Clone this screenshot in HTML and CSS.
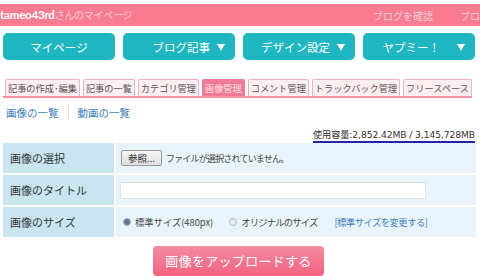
FILE: index.html
```html
<!DOCTYPE html>
<html lang="ja">
<head>
<meta charset="utf-8">
<link rel="stylesheet" href="styles.css">
</head>
<body>
<div class="page">
  <header class="topbar">
    <div class="user"><b>tameo43rd</b><span>さんのマイページ</span></div>
    <nav class="toplinks"><span>ブログを確認</span><span>ブロ</span></nav>
  </header>
  <div class="menu">
    <div class="mbtn">マイページ</div>
    <div class="mbtn arrow">ブログ記事</div>
    <div class="mbtn arrow">デザイン設定</div>
    <div class="mbtn arrow wide">ヤプミー！</div>
  </div>
  <div class="tabs">
    <div class="tab">記事の作成･編集</div>
    <div class="tab">記事の一覧</div>
    <div class="tab">カテゴリ管理</div>
    <div class="tab active">画像管理</div>
    <div class="tab">コメント管理</div>
    <div class="tab">トラックバック管理</div>
    <div class="tab">フリースペース</div>
  </div>
  <div class="sublinks"><a>画像の一覧</a><span class="sep"></span><a>動画の一覧</a></div>
  <div class="usage"><span>使用容量:2,852.42MB / 3,145,728MB</span></div>
  <div class="form">
    <div class="row">
      <div class="label">画像の選択</div>
      <div class="field"><span class="browse">参照...</span><span class="note">ファイルが選択されていません。</span></div>
    </div>
    <div class="row">
      <div class="label">画像のタイトル</div>
      <div class="field"><span class="textbox"></span></div>
    </div>
    <div class="row">
      <div class="label">画像のサイズ</div>
      <div class="field small">
        <span class="radio on"></span><span class="opt">標準サイズ(480px)</span>
        <span class="radio second"></span><span class="opt narrow">オリジナルのサイズ</span>
        <a class="change">[標準サイズを変更する]</a>
      </div>
    </div>
  </div>
  <div class="submit"><div class="upload">画像をアップロードする</div></div>
</div>
</body>
</html>
```
FILE: styles.css
```css
html, body { margin: 0; padding: 0; background: #fff; }
body { width: 480px; height: 276px; overflow: hidden; font-family: "Noto Sans CJK JP", "Noto Sans", sans-serif; color: #333; }
.page { padding-top: 4px; }
.topbar { height: 22px; background: #f97b8f; display: flex; align-items: center; justify-content: space-between; white-space: nowrap; overflow: hidden; }
.user { font-size: 10px; color: #fff; line-height: 22px; }
.user b { font-family: "Lato", "Noto Sans", sans-serif; font-weight: 700; font-size: 11.5px; letter-spacing: -0.2px; }
.user span { color: #fcd0d8; font-size: 10px; letter-spacing: -0.3px; }
.toplinks { display: flex; gap: 27px; font-size: 10px; color: #fcd0d8; margin-right: 0; }
.menu { display: flex; gap: 8px; padding: 7px 0 0 3px; }
.mbtn { width: 112px; height: 27px; border-radius: 5px; background: #1eb6c1; color: #fff; font-size: 11.5px; display: flex; align-items: center; justify-content: center; position: relative; box-sizing: border-box; }
.mbtn.arrow { justify-content: flex-end; padding-right: 25px; }
.mbtn.arrow.wide { padding-right: 35px; }
.mbtn.arrow::after { content: ""; position: absolute; right: 10px; top: 11px; border-left: 4px solid transparent; border-right: 4px solid transparent; border-top: 7px solid #fff; }
.tabs { display: flex; gap: 3px; margin: 19px 8px 0 3px; padding-left: 2px; border-bottom: 2px solid #f690a6; height: 17px; align-items: flex-end; }
.tab { height: 16px; padding: 0 2px; border: 1px solid #f4b2c0; border-bottom: none; background: #fdeef1; font-size: 9.2px; line-height: 16px; color: #555; border-radius: 2px 2px 0 0; white-space: nowrap; }
.tab.active { background: #f27995; border-color: #f27995; color: #fde3e9; }
.sublinks { display: flex; align-items: center; padding: 8px 0 0 6px; font-size: 10.5px; line-height: 14px; }
.sublinks a { color: #3d7fbf; }
.sep { width: 1px; height: 14px; background: #dde3e8; margin: 0 9px; }
.usage { text-align: right; padding: 7px 5px 0 0; font-size: 10px; line-height: 13px; }
.usage span { font-family: "DejaVu Sans", "Noto Sans CJK JP", sans-serif; font-size: 9.2px; border-bottom: 2px solid #2222aa; padding-bottom: 1px; color: #333; letter-spacing: -0.1px; }
.form { display: flex; flex-direction: column; gap: 2px; margin: 2px 4px 0 3px; }
.row { display: flex; gap: 2px; height: 30px; }
.label { width: 111px; background: #c8e5f1; font-size: 11px; line-height: 30px; padding-left: 7px; box-sizing: border-box; color: #333; }
.field { flex: 1; background: #e8f4f9; display: flex; align-items: center; padding-left: 4px; font-size: 10px; color: #444; }
.field.small { font-size: 9.3px; }
.browse { display: inline-block; height: 14px; line-height: 14px; padding: 0 6px; margin-left: 1px; border: 1px solid #999; border-radius: 2px; background: linear-gradient(#f6f6f6, #dedede); font-size: 9.5px; color: #222; }
.note { margin-left: 4px; font-size: 9px; letter-spacing: -0.8px; }
.textbox { display: block; width: 304px; height: 15px; background: #fff; border: 1px solid #dfe7ea; border-top-color: #cfd8dc; }
.radio { width: 6px; height: 6px; border-radius: 50%; border: 1px solid #b0b8be; background: #e6e9ec; margin-left: 3px; margin-right: 4px; box-sizing: content-box; }
.radio.on { background: #5d7891; border-color: #a9b7c4; }
.radio.second { margin-left: 16px; }
.narrow { letter-spacing: -0.8px; }
.change { color: #3d7fbf; margin-left: 17px; letter-spacing: -0.5px; }
.submit { display: flex; padding: 9px 0 0 153px; }
.upload { width: 171px; height: 30px; border-radius: 4px; background: linear-gradient(#f58aa1, #f2637f); color: #fff; font-size: 13px; line-height: 30px; text-align: center; letter-spacing: 0.3px; }
```
